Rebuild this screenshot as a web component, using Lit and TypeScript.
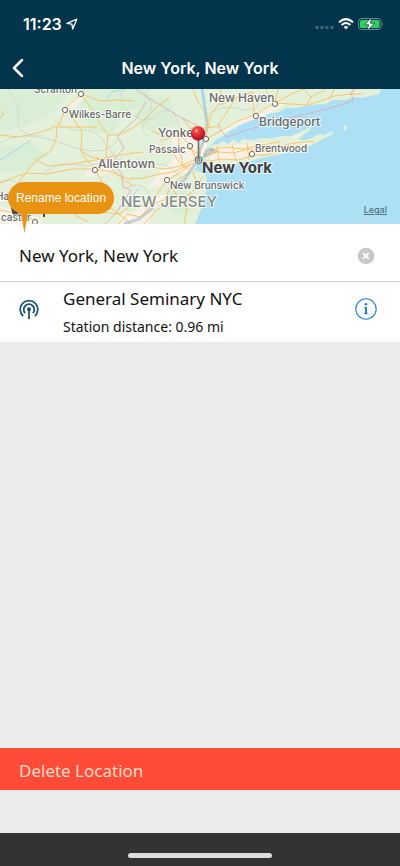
import { LitElement, html, svg, css } from "lit";
import { customElement, state } from "lit/decorators.js";

interface Label {
  text: string;
  x: number;
  y: number;
  kind: string;
}

const LABELS: Label[] = [
  { text: "Scranton", x: 34, y: 4, kind: "town" },
  { text: "Wilkes-Barre", x: 69, y: 29, kind: "town" },
  { text: "Allentown", x: 98, y: 79, kind: "city" },
  { text: "Ha", x: -4, y: 111, kind: "town" },
  { text: "caster", x: 1, y: 132, kind: "town" },
  { text: "New Haven", x: 209, y: 13, kind: "city" },
  { text: "Bridgeport", x: 259, y: 37, kind: "city" },
  { text: "Yonkers", x: 158, y: 48, kind: "city" },
  { text: "Passaic", x: 149, y: 64, kind: "town" },
  { text: "Brentwood", x: 255, y: 63, kind: "town" },
  { text: "New Brunswick", x: 170, y: 100, kind: "town" },
  { text: "New York", x: 202, y: 84, kind: "metro" },
  { text: "NEW JERSEY", x: 121, y: 118, kind: "region" },
];

const TOWNS = [
  [81, 5], [65, 21], [95, 81], [35, 133], [275, 15], [256, 27],
  [206, 50], [190, 57], [252, 65], [167, 91],
];

const LAND =
  "M0 0H381L379 5L370 7L362 9L354 8L345 11L334 11L325 15L310 16L295 19L286 19L279 23L268 25L262 29L252 31L240 36L231 41L223 47L215 52L210 57L206 63L201 69L198 72L194 76L188 79L190 82L198 82L205 85L207 94L206 103L204 111L200 123L195 135H0Z";
const ISLAND =
  "M208 61L212 56L218 55L223 52L228 55L233 50L238 54L243 50L252 51L262 49L273 49L282 47L291 47L299 44L306 40L312 37L309 42L302 47L299 51L306 51L312 49L319 45L324 46L332 42L333 45L323 50L312 56L298 60L282 65L262 69L250 72L238 74L222 76L208 75L204 70Z";

const GREENS = [
  "M0 0H74L62 12L47 28L30 36L0 42Z",
  "M83 0H150L145 14L122 27L112 45L92 42L80 25Z",
  "M147 4L170 10L178 34L160 44L144 40L134 25Z",
  "M0 57L30 53L48 66L25 82L0 84Z",
  "M169 98L188 100L197 109L190 126L172 124L160 108Z",
];

const URBAN = [
  "M171 48L190 43L207 50L206 64L192 82L174 86L161 96L148 99L159 84L174 70Z",
  "M88 79L104 74L113 82L97 88L84 87Z",
  "M132 135L137 119L152 112L163 105L169 111L154 119L148 135Z",
  "M66 19L82 2L86 7L73 20Z",
  "M208 61L220 57L262 54L278 54L272 62L245 69L211 73Z",
  "M214 48L230 35L252 25L276 14L286 15L262 28L236 38Z",
  "M0 117L24 124L42 130L41 135H0Z",
  "M118 135L122 125L137 122L140 135Z",
];

const MINOR = [
  "M0 54Q18 44 38 48T70 57T97 62T118 50",
  "M8 0Q20 13 18 30T42 47",
  "M55 32Q70 43 83 41T108 58T121 68",
  "M44 83Q60 72 80 76T116 62",
  "M122 0Q117 15 132 26T160 25T180 39",
  "M137 70Q148 77 158 75T182 90",
  "M0 93Q14 88 22 98T49 94",
  "M127 98Q144 91 150 107T181 116",
  "M143 2Q158 18 147 30T150 48",
  "M207 25Q223 15 240 20T260 10",
];

const ROADS = [
  "M0 46L18 48L34 45L47 41L56 37L57 38L97 38",
  "M85 0L81 5L65 20L62 29L57 38L56 50L51 62L36 71L30 79L26 84L17 95",
  "M65 20L75 32L82 43L81 62L85 69L95 80",
  "M81 5L92 21L101 36L108 46L118 46L131 40L145 30L157 18L170 8",
  "M108 46L106 64L110 78L122 90L133 97",
  "M81 5L100 12L119 11L134 12",
  "M36 71L49 77L72 75L95 71L105 69L126 65L143 63",
  "M0 94L26 84L47 85L72 80L95 80L112 83L128 90L144 89L160 85L173 83L184 78L197 73",
  "M81 62L91 68L105 70",
  "M17 95L40 102L60 113L76 127L89 133",
  "M0 121L15 124L27 126L35 133",
  "M103 123L119 125L132 116L144 117L153 111L167 91L181 83L190 76",
  "M119 135L127 125L140 128L153 115L164 111L173 94L186 86L198 73",
  "M106 116L118 124L131 135M95 81L103 94L104 108L110 121",
  "M143 77L165 80L181 77L194 71M153 57L172 63L187 59L199 65",
  "M152 42L166 48L180 46L190 56L197 73",
  "M160 52L177 47L194 38L205 39L219 37M183 30L194 43L206 50L219 43L238 32L254 26L275 14L307 16L321 12L334 7L351 5L362 5",
  "M193 0L198 13L208 27L207 40L206 50L201 59L198 73",
  "M221 0L220 13L211 26L207 42",
  "M220 16L236 9L253 3M236 9L227 23L219 34M253 3L254 26",
  "M275 14L265 0M278 0L275 14M275 14L291 5L304 0",
  "M307 16L311 8L326 0M311 8L304 0M334 0L330 10M351 5L355 0",
  "M200 70L217 63L233 64L249 60L263 63L281 57L295 54L314 52",
  "M203 73L222 70L239 71L253 66L267 66L286 60",
  "M206 62L224 58L244 60L256 57L280 53M217 57L219 72M232 56L236 72M247 54L249 71",
  "M184 135L187 119L190 105L198 96L203 87",
  "M144 135L157 121L173 112L190 106M167 91L178 108L187 120",
  "M173 64L181 75L193 83L198 96M178 45L180 63L184 79",
  "M0 29L4 25L0 22M0 106L12 111L25 122",
];

@customElement("app-root")
export class AppRoot extends LitElement {
  @state() private name = "New York, New York";

  static styles = css`
    :host {
      display: flex;
      flex-direction: column;
      min-height: 100vh;
      background: #ebebeb;
      color: #111;
      font-family: "Noto Sans", sans-serif;
    }
    * { box-sizing: border-box; }
    button { border: 0; padding: 0; background: none; font: inherit; color: inherit; cursor: pointer; }
    svg { display: block; }
    header { background: #02344b; color: #fff; font-family: Inter, sans-serif; }
    .status { display: flex; align-items: center; height: 48px; padding: 0 16px 0 23px; }
    .time { font-size: 16px; font-weight: 600; line-height: 20px; }
    .arrow { margin-left: 4px; }
    .indicators { display: flex; align-items: center; gap: 4px; margin-left: auto; }
    .nav { display: grid; grid-template-columns: 40px 1fr 40px; align-items: center; height: 41px; padding-bottom: 1px; }
    .back { display: grid; place-items: center start; height: 40px; padding-left: 11px; }
    h1 { margin: 0; font-size: 16px; line-height: 20px; font-weight: 600; text-align: center; }
    .map { position: relative; height: 135px; background: #aee0f5; }
    .canvas { width: 100%; height: 135px; }
    .green { fill: #d9eed5; }
    .urban { fill: #f8f1e6; }
    .water { fill: none; stroke: #a5d7ed; }
    .minor { fill: none; stroke: #d0d9d0; stroke-width: 1; }
    .road { fill: none; stroke: #f8c46a; stroke-width: 1; stroke-linejoin: round; }
    .border { fill: none; stroke: #dfa6b1; stroke-width: 1; opacity: 0.8; }
    .dot { fill: #fff; stroke: #666; stroke-width: 1; }
    .label { font-family: Inter, sans-serif; fill: #686868; stroke: #fff; stroke-width: 2px; stroke-opacity: 0.8; paint-order: stroke; stroke-linejoin: round; font-weight: 500; }
    .town { font-size: 10px; }
    .city { font-size: 12px; }
    .metro { font-size: 15px; font-weight: 700; fill: #3c3c3c; }
    .region { font-size: 15px; fill: #858b86; }
    .legal { position: absolute; right: 13px; bottom: 8px; font: 500 9px/12px Inter, sans-serif; color: #50707e; }
    .tip { position: absolute; left: 8px; top: 93px; z-index: 1; height: 32px; padding: 0 8px; border-radius: 16px; background: #e99312; color: #fff; font: 12px/32px "Liberation Sans", sans-serif; white-space: nowrap; }
    .tail { position: absolute; left: 13px; top: 31px; }
    .name { display: flex; align-items: center; height: 58px; padding: 6px 25px 0 19px; background: #fff; border-bottom: 1px solid #d2d2d2; }
    .field { flex: 1; min-width: 0; border: 0; padding: 0; outline: 0; background: none; color: inherit; font: 17px/24px "Noto Sans", sans-serif; }
    .station { display: flex; align-items: center; height: 60px; padding: 2px 23px 0 19px; background: #fff; }
    .details { flex: 1; min-width: 0; margin-left: 24px; }
    .title { margin: 0; font-size: 17px; line-height: 28px; font-weight: 400; }
    .distance { margin: 0; font-size: 14px; line-height: 28px; }
    .antenna, .info { margin-top: -8px; }
    .delete { margin-top: auto; height: 42px; padding: 2px 19px 0; background: #ff4b37; color: #fbdcc6; font-size: 17px; text-align: left; }
    footer { display: flex; justify-content: center; align-items: center; height: 33px; margin-top: 43px; padding-top: 12px; background: #333; }
    .home { width: 36%; height: 5px; border-radius: 3px; background: #dedede; }
  `;

  private map() {
    return svg`
      <svg class="canvas" viewBox="0 0 400 135" preserveAspectRatio="xMidYMid slice" role="img" aria-label="Map of New York">
        <defs>
          <radialGradient id="pin" cx="0.38" cy="0.3" r="0.7">
            <stop offset="0" stop-color="#ffb0a5"/><stop offset="0.25" stop-color="#ef4040"/>
            <stop offset="0.7" stop-color="#d51f2a"/><stop offset="1" stop-color="#9b1820"/>
          </radialGradient>
          <clipPath id="land"><path d=${LAND}/><path d=${ISLAND}/></clipPath>
        </defs>
        <path d=${LAND} fill="#e4f1da"/>
        <path d=${ISLAND} fill="#e6f0d6"/>
        <path d="M343 38l3-2l1 3l-2 3zM291 48l9-4l4 1l-8 4z" fill="#edf3e0"/>
        <path d="M184 80L191 75L197 77L194 82L186 85Z" fill="#f3eddd"/>
        <g clip-path="url(#land)">
          ${GREENS.map((d) => svg`<path class="green" d=${d}/>`)}
          ${URBAN.map((d) => svg`<path class="urban" d=${d}/>`)}
          <path class="water" stroke-width="3" d="M202 0L204 13L206 27L207 37L204 49L200 61L198 70"/>
          <path class="water" stroke-width="1" d="M0 71L19 59L31 51M108 9L111 3L126 0M118 120L130 110L139 99"/>
          ${MINOR.map((d) => svg`<path class="minor" d=${d}/>`)}
          ${ROADS.map((d) => svg`<path class="road" d=${d}/>`)}
        </g>
        <path class="border" d="M135 0L150 10L164 18L180 28L196 36L205 42M146 13L135 31L117 47L124 59L115 69L115 77L122 85L123 98L131 101L124 112L116 124L105 135"/>
        <path class="border" d="M218 34L221 42L227 48L244 42L270 34L302 26L330 19L353 12L351 3L355 0"/>
        <path d="M204 66L207 61L213 60M195 75L185 90L175 99M153 119L139 130L124 135" fill="none" stroke="#9fafca" stroke-width="3" opacity="0.55"/>
        <path d="M11 119h15v4q-5 4-13 3zM43 125h2v3h-2z" fill="#444"/>
        ${TOWNS.map(([x, y]) => svg`<circle class="dot" cx=${x} cy=${y} r="2.6"/>`)}
        ${LABELS.map((l) => svg`<text class="label ${l.kind}" x=${l.x} y=${l.y}>${l.text}</text>`)}
        <circle cx="198.500" cy="71" r="3.500" fill="#fff" stroke="#555"/>
        <circle cx="198.500" cy="71" r="1.800" fill="#aaa" stroke="#555" stroke-width="0.700"/>
        <path d="M201 69L212 60L219 62Z" fill="#555" opacity="0.250"/>
        <path d="M198.500 50V70" stroke="#777" stroke-width="1.700"/>
        <circle cx="198" cy="44.500" r="7.200" fill="url(#pin)"/>
      </svg>`;
  }

  render() {
    return html`
      <header>
        <div class="status">
          <span class="time">11:23</span>
          <svg class="arrow" width="12" height="12" viewBox="0 0 12 12" aria-hidden="true">
            <path d="M1 5.400L10.800 1.200L6.700 11L5.900 6.200Z" fill="none" stroke="#fff" stroke-width="1.300" stroke-linejoin="round"/>
          </svg>
          <div class="indicators">
            <svg width="19" height="16" viewBox="0 0 19 16" aria-hidden="true">
              <path d="M.5 10h3v3h-3zM5.500 10h3v3h-3zM10.500 10h3v3h-3zM15.500 10h3v3h-3z" fill="#436777"/>
            </svg>
            <svg width="16" height="12" viewBox="0 0 16 12" aria-hidden="true">
              <g fill="none" stroke="#fff" stroke-width="2"><path d="M1 4.300Q8-2 15 4.300"/><path d="M3.500 7Q8 2.900 12.500 7"/></g>
              <path d="M5.600 8.900Q8 7 10.400 8.900L8 11.500Z" fill="#fff"/>
            </svg>
            <svg width="26" height="14" viewBox="0 0 26 14" aria-hidden="true">
              <rect x=".5" y="1.500" width="22.500" height="11" rx="3" fill="none" stroke="#6d8a97"/>
              <rect x="2" y="3" width="19.500" height="8" rx="1.500" fill="#31cf5c"/>
              <path d="M24.200 5V9Q26 7 24.200 5" fill="#6d8a97"/>
              <path d="M13.500 .3L6.600 7.800H10.700L9 13.800L16.800 6.200H12.400Z" fill="#fff" stroke="#02344b" stroke-width=".7"/>
            </svg>
          </div>
        </div>
        <div class="nav">
          <button class="back" aria-label="Back">
            <svg width="14" height="20" viewBox="0 0 14 20" aria-hidden="true">
              <path d="M11 2L3 10L11 18" fill="none" stroke="#fff" stroke-width="2.500" stroke-linecap="round" stroke-linejoin="round"/>
            </svg>
          </button>
          <h1>New York, New York</h1>
        </div>
      </header>
      <div class="map">
        ${this.map()}
        <a class="legal" href="#legal">Legal</a>
        <div class="tip">
          Rename location
          <svg class="tail" width="7" height="21" viewBox="0 0 7 21" aria-hidden="true"><path d="M0 0H7L3.500 20Z" fill="#e99312"/></svg>
        </div>
      </div>
      <div class="name">
        <input class="field" aria-label="Location name" .value=${this.name}
          @input=${(e: Event) => (this.name = (e.target as HTMLInputElement).value)} />
        <button aria-label="Clear name" @click=${() => (this.name = "")}>
          <svg width="18" height="18" viewBox="0 0 18 18" aria-hidden="true">
            <circle cx="9" cy="9" r="8.300" fill="#c9c9c9"/>
            <path d="M6.200 6.200L11.800 11.800M11.800 6.200L6.200 11.800" stroke="#fff" stroke-width="1.800"/>
          </svg>
        </button>
      </div>
      <section class="station">
        <svg class="antenna" width="20" height="20" viewBox="0 0 20 20" aria-hidden="true">
          <g fill="none" stroke="#1e5474" stroke-width="1.800">
            <path d="M4.200 17A8.800 8.800 0 1 1 15.800 17"/>
            <path d="M6.200 14.200A5.300 5.300 0 1 1 13.800 14.200"/>
            <path d="M10 10V20"/>
          </g>
          <circle cx="10" cy="10.200" r="2" fill="#1e5474"/>
        </svg>
        <div class="details">
          <h2 class="title">General Seminary NYC</h2>
          <p class="distance">Station distance: 0.96 mi</p>
        </div>
        <button class="info" aria-label="Station information">
          <svg width="22" height="22" viewBox="0 0 22 22" aria-hidden="true">
            <circle cx="11" cy="11" r="10.200" fill="none" stroke="#1e7ce8" stroke-width="1.100"/>
            <circle cx="10.900" cy="6.200" r="1.300" fill="#1e7ce8"/>
            <path d="M8.800 9H12V15.500H13.300V16.300H8.700V15.500H10V9.800H8.800Z" fill="#1e7ce8"/>
          </svg>
        </button>
      </section>
      <button class="delete">Delete Location</button>
      <footer><div class="home"></div></footer>
    `;
  }
}
